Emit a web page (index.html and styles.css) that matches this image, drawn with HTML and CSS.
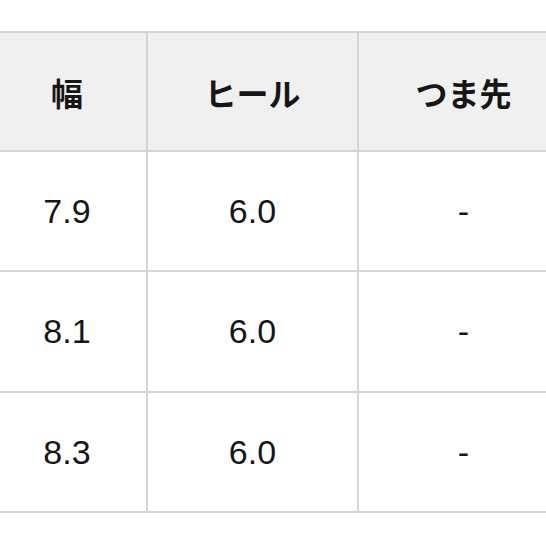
FILE: index.html
```html
<!DOCTYPE html>
<html lang="ja">
<head>
<meta charset="utf-8">
<link rel="stylesheet" href="styles.css">
</head>
<body>
<div class="sheet">
  <div class="grid">
    <div class="cell head">幅</div>
    <div class="cell head">ヒール</div>
    <div class="cell head">つま先</div>
    <div class="cell">7.9</div>
    <div class="cell">6.0</div>
    <div class="cell">-</div>
    <div class="cell">8.1</div>
    <div class="cell">6.0</div>
    <div class="cell">-</div>
    <div class="cell">8.3</div>
    <div class="cell">6.0</div>
    <div class="cell">-</div>
  </div>
</div>
</body>
</html>
```

FILE: styles.css
```css
html, body {
  margin: 0;
  padding: 0;
  background: #ffffff;
  overflow: hidden;
}
.sheet {
  width: 546px;
  height: 546px;
  overflow: hidden;
  padding-top: 31px;
  box-sizing: border-box;
}
.grid {
  display: grid;
  grid-template-columns: 158px 209px 209px;
  grid-template-rows: 117px 118px 119px 118px;
  gap: 2px;
  padding: 2px;
  background: #d5d5d5;
  margin-left: -14px;
  width: max-content;
}
.cell {
  background: #ffffff;
  display: flex;
  align-items: center;
  justify-content: center;
  color: #161616;
  font-family: "Liberation Sans", Arial, sans-serif;
  font-size: 34px;
}
.head {
  background: #f0f0f0;
  font-family: "Noto Sans CJK JP", sans-serif;
  font-weight: 700;
  font-size: 32px;
}
```
